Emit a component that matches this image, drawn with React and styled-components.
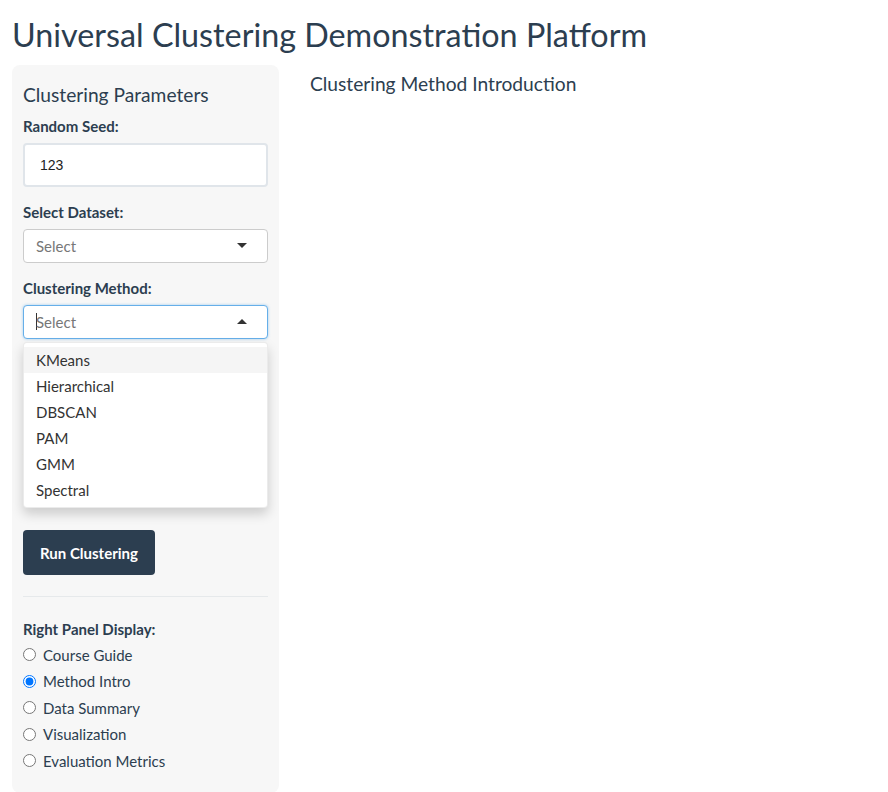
import React from "react";
import styled, { createGlobalStyle } from "styled-components";

const GlobalStyle = createGlobalStyle`
  body {
    margin: 0;
    background: #ffffff;
    font-family: Lato, "Open Sans", sans-serif;
    font-size: 15px;
    color: #2c3e50;
  }
`;

const Page = styled.div`
  padding: 0 12px;
`;

const Title = styled.h2`
  margin: 0;
  padding: 16px 0 10px;
  font-size: 32.3px;
  font-weight: 400;
  line-height: 1.2;
`;

const Row = styled.div`
  display: flex;
  align-items: flex-start;
`;

const Sidebar = styled.div`
  width: 267px;
  box-sizing: border-box;
  padding: 18px 11px 19px;
  background: #f7f7f7;
  border-radius: 8px;
`;

const Main = styled.div`
  flex: 1;
  padding-left: 31px;
  padding-top: 7px;
`;

const SectionTitle = styled.h4`
  margin: 0 0 ${(p) => p.$gap || 4}px;
  font-size: 19.2px;
  font-weight: 400;
  line-height: 1.2;
`;

const Group = styled.div`
  margin-bottom: ${(p) => p.$gap || 15}px;
  position: relative;
`;

const Label = styled.div`
  font-weight: 700;
  font-size: 15px;
  line-height: 21px;
  margin-bottom: ${(p) => p.$gap ?? 6}px;
`;

const NumberBox = styled.div`
  height: 44px;
  box-sizing: border-box;
  border: 2px solid #e0e5ea;
  border-radius: 4px;
  background: #fff;
  display: flex;
  align-items: center;
  padding-left: 15px;
  font-family: "Liberation Sans", Arial, sans-serif;
  font-size: 14px;
  color: #222;
`;

const SelectBox = styled.div`
  height: 34px;
  box-sizing: border-box;
  border: 1px solid ${(p) => (p.$focused ? "#66afe9" : "#cccccc")};
  box-shadow: ${(p) => (p.$focused ? "0 0 3px rgba(102,175,233,0.6)" : "none")};
  border-radius: 4px;
  background: #fff;
  display: flex;
  align-items: center;
  justify-content: space-between;
  padding: 0 20px 0 12px;
  color: #777;
  font-size: 15px;
`;

const Placeholder = styled.span`
  display: flex;
  align-items: center;
`;

const Cursor = styled.span`
  display: inline-block;
  width: 1px;
  height: 17px;
  background: #333;
  margin-right: -1px;
`;

const Caret = styled.span`
  width: 0;
  height: 0;
  border-left: 5px solid transparent;
  border-right: 5px solid transparent;
  ${(p) =>
    p.$up
      ? "border-bottom: 5px solid #333;"
      : "border-top: 5px solid #333;"}
`;

const Dropdown = styled.div`
  position: absolute;
  left: 0;
  right: 0;
  top: 64px;
  z-index: 10;
  background: #fff;
  border: 1px solid rgba(0, 0, 0, 0.08);
  border-radius: 4px;
  box-shadow: 0 6px 12px rgba(0, 0, 0, 0.175);
  padding: 4px 0 4px;
`;

const Option = styled.div`
  height: 26px;
  line-height: 26px;
  padding-left: 12px;
  font-size: 15px;
  color: #333;
  background: ${(p) => (p.$active ? "#f5f5f5" : "transparent")};
`;

const RadioRow = styled.label`
  display: flex;
  align-items: center;
  height: 26.5px;
  font-size: 15px;
  color: #2c3e50;

  input {
    margin: 0 7px 0 ${(p) => p.$indent || 0}px;
    width: 13px;
    height: 13px;
  }
`;

const RunButton = styled.button`
  margin-top: 2px;
  height: 45px;
  padding: 0 17px;
  border: none;
  border-radius: 4px;
  background: #2c3e50;
  color: #fff;
  font-family: Lato, sans-serif;
  font-size: 15px;
  font-weight: 700;
`;

const Divider = styled.hr`
  border: none;
  border-top: 1px solid #e6e9eb;
  margin: 21px 0 22px;
`;

const methods = ["KMeans", "Hierarchical", "DBSCAN", "PAM", "GMM", "Spectral"];
const panels = [
  "Course Guide",
  "Method Intro",
  "Data Summary",
  "Visualization",
  "Evaluation Metrics",
];

export default function App() {
  return (
    <Page>
      <GlobalStyle />
      <Title>Universal Clustering Demonstration Platform</Title>
      <Row>
        <Sidebar>
          <SectionTitle $gap={10}>Clustering Parameters</SectionTitle>
          <Group>
            <Label>Random Seed:</Label>
            <NumberBox>123</NumberBox>
          </Group>
          <Group>
            <Label>Select Dataset:</Label>
            <SelectBox>
              <Placeholder>Select</Placeholder>
              <Caret />
            </SelectBox>
          </Group>
          <Group>
            <Label>Clustering Method:</Label>
            <SelectBox $focused>
              <Placeholder>
                <Cursor />
                Select
              </Placeholder>
              <Caret $up />
            </SelectBox>
            <Dropdown>
              {methods.map((m, i) => (
                <Option key={m} $active={i === 0}>
                  {m}
                </Option>
              ))}
            </Dropdown>
          </Group>
          <Group>
            <Label>Number of Clusters:</Label>
            <NumberBox>3</NumberBox>
          </Group>
          <Group $gap={14}>
            <Label $gap={27}>Scaling:</Label>
            <RadioRow $indent={2}>
              <input type="radio" name="scale" defaultChecked />
            </RadioRow>
          </Group>
          <RunButton>Run Clustering</RunButton>
          <Divider />
          <Label $gap={1}>Right Panel Display:</Label>
          {panels.map((p, i) => (
            <RadioRow key={p}>
              <input type="radio" name="panel" defaultChecked={i === 1} />
              {p}
            </RadioRow>
          ))}
        </Sidebar>
        <Main>
          <SectionTitle>Clustering Method Introduction</SectionTitle>
        </Main>
      </Row>
    </Page>
  );
}
